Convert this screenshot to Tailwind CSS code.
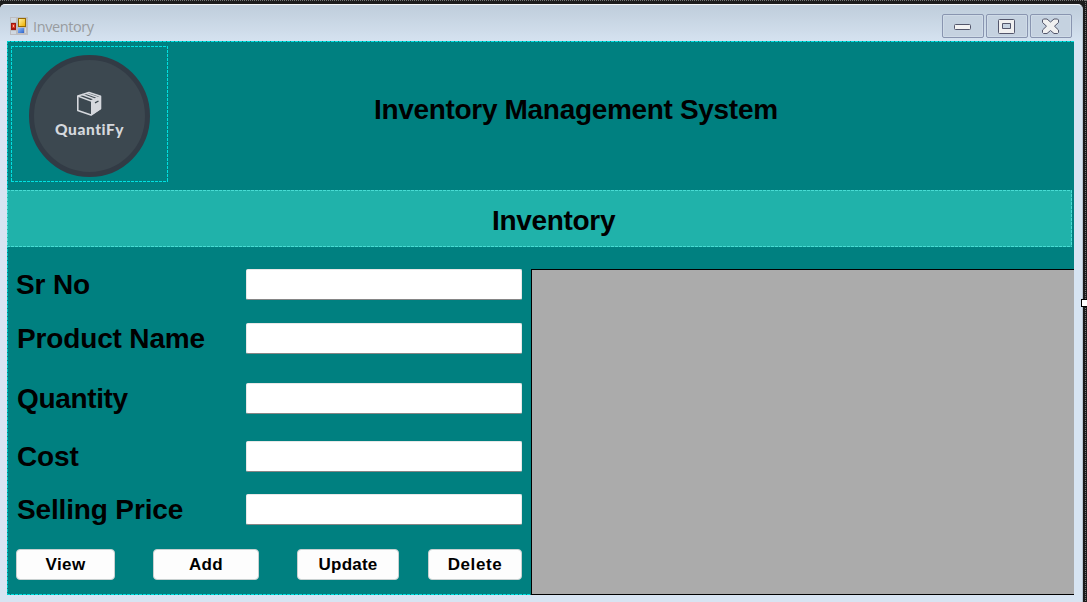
<!DOCTYPE html>
<html lang="en">
<head>
<meta charset="utf-8">
<title>Inventory</title>
<script src="https://cdn.jsdelivr.net/npm/@tailwindcss/browser@4"></script>
</head>
<body class="w-[1087px] h-[602px] overflow-hidden bg-[#1c1c1c] font-['Liberation_Sans',sans-serif] text-black relative">
<!-- designer surface edges -->
<svg class="absolute inset-0" width="1087" height="602" shape-rendering="crispEdges"><path d="M0 .5H1087M1085.500 0V602" stroke="#777" stroke-dasharray="1 1"/></svg>
<div class="relative mt-[4px] w-[1083px] h-[598px] rounded-t-[5px] border-t border-r border-t-[#f4f7fa] border-r-[#b9c5d3] bg-[#d7e4f2] pl-[7px]">
  <header class="-ml-[7px] pl-[10px] pr-[10px] h-[36px] flex items-start rounded-t-[5px] bg-linear-to-b from-[#bfcddb] to-[#d5e2f0]">
    <svg class="mt-[12px]" width="18" height="18" shape-rendering="crispEdges">
      <defs><linearGradient id="y" x2="1" y2="1"><stop stop-color="#fff0a0"/><stop offset="1" stop-color="#eeb000"/></linearGradient><linearGradient id="b" x2="1" y2="1"><stop stop-color="#8fc0ff"/><stop offset="1" stop-color="#2d62c8"/></linearGradient></defs>
      <path fill="#bdbdc1" d="M0 0h18v18H0z"/><path fill="#cfd8e1" d="M1 1h5v4H1zM1 14h5v3H1zM15 11h1v5h-1z"/>
      <path fill="#a01810" d="M1 6h5v7H1z"/><path fill="#d93a24" d="M2 7h3v4H2z"/><path fill="#ffb0a0" d="M3 8h1v2H3z"/>
      <path fill="#966a00" d="M8 1h8v9H8z"/><path fill="url(#y)" d="M9 2h6v7H9z"/><path fill="url(#b)" d="M8 11h6v5H8z"/>
    </svg>
    <span class="ml-[5px] mt-[12px] font-['Open_Sans',sans-serif] text-[14.500px] leading-[20px] text-[#999ca0] tracking-[-0.4px]">Inventory</span>
    <div class="ml-auto mt-[9px] flex gap-[2px]">
      <div class="w-[42px] h-[24px] rounded-[2px] border border-[#8995b0] bg-[#c5d2e0] shadow-[inset_0_0_0_1px_#cfdbe7]"><svg width="40" height="22"><rect x="11.500" y="9.500" width="16" height="5" rx="1" fill="#f3f3f3" stroke="#53566b"/></svg></div>
      <div class="w-[42px] h-[24px] rounded-[2px] border border-[#8995b0] bg-[#c5d2e0] shadow-[inset_0_0_0_1px_#cfdbe7]"><svg width="40" height="22"><path d="M12.500 4.500h14a1 1 0 0 1 1 1v12a1 1 0 0 1-1 1h-14a1 1 0 0 1-1-1v-12a1 1 0 0 1 1-1z" fill="#f0f0f0" stroke="#53566b"/><path d="M15.500 8.500h8v5h-8z" fill="#c5d2e0" stroke="#53566b"/></svg></div>
      <div class="w-[42px] h-[24px] rounded-[2px] border border-[#8995b0] bg-[#c5d2e0] shadow-[inset_0_0_0_1px_#cfdbe7]"><svg width="40" height="22"><path d="M12.500 4h3.500l3.500 3 3.500-3h3.500l1 1v2.500l-4 3.700 4 3.800v2.500l-1 1h-3.500l-3.500-3-3.500 3h-3.500l-1-1v-2.500l4-3.800-4-3.700v-2.500z" fill="#f0f0f0" stroke="#53566b" stroke-linejoin="round"/></svg></div>
    </div>
  </header>
  <main class="relative w-[1067px] h-[554px] bg-[#008080]">
    <svg class="absolute inset-0" width="1067" height="554" shape-rendering="crispEdges" fill="none"><path d="M0 .5H1067M0 553.500H524" stroke="#00e0e0" stroke-dasharray="3 1"/><path d="M.5 0V554" stroke="#00c8c8" stroke-dasharray="3 1"/></svg>
    <section class="h-[149px] flex pl-[4px] pt-[5px]">
      <div class="relative w-[157px] h-[136px]">
        <svg width="157" height="136" fill="none">
          <path d="M0 .5H157M0 135.500H157M.5 0V136M156.500 0V136" stroke="#00e0e0" stroke-dasharray="3 1" shape-rendering="crispEdges"/>
          <ellipse cx="78.500" cy="70" rx="58" ry="58.500" fill="#3c4850" stroke="#323b45" stroke-width="5"/>
          <path d="M66.800 50L78 46.600 89.500 50.300V62.500L80 69 66.800 64.500z" stroke="#d5d8dd" stroke-width="1.600" stroke-linejoin="round"/>
          <path d="M80 55L90 50.500V63L80 69.500z" fill="#d5d8dd"/>
          <path d="M66.800 50L80 55 89.500 50.300M71 48.500L83.500 53M75 47.300L87 51.500" stroke="#d5d8dd" stroke-width="1.400"/>
          <path d="M84 56.800l3.500-1.800" stroke="#3c4850" stroke-width="1.400"/>
        </svg>
        <span class="absolute left-0 top-[73px] w-[157px] text-center font-['Lato',sans-serif] font-black text-[15.500px] leading-[20px] tracking-[0.550px] text-[#d5d8dd]">QuantiFy</span>
      </div>
      <h1 class="ml-[206px] mt-[48px] font-bold text-[28px] leading-[32px] tracking-[-0.32px] whitespace-nowrap">Inventory Management System</h1>
    </section>
    <section class="relative w-[1065px] h-[57px] bg-[#20b2aa] flex">
      <svg class="absolute inset-0" width="1065" height="57" fill="none" shape-rendering="crispEdges"><path d="M0 .5H1065M0 56.500H1065M.5 0V57M1064.500 0V57" stroke="#48dcd4" stroke-dasharray="3 1"/></svg>
      <h2 class="ml-[485px] mt-[15px] font-bold text-[28px] leading-[32px] tracking-[-0.32px]">Inventory</h2>
    </section>
    <section class="flex pt-[22px]">
      <form class="w-[506px] ml-[9px] mr-[9px] font-bold text-[28px] leading-[31px] tracking-[-0.15px]">
        <label class="flex justify-between h-[54px]"><span>Sr No</span><input class="w-[276px] h-[31px] bg-white rounded-[2px] border border-[#e8e8e8] border-b-[#858585]"></label>
        <label class="flex justify-between h-[60px]"><span class="ml-px">Product Name</span><input class="w-[276px] h-[31px] bg-white rounded-[2px] border border-[#e8e8e8] border-b-[#858585]"></label>
        <label class="flex justify-between h-[58px]"><span class="ml-px tracking-[-0.35px]">Quantity</span><input class="w-[276px] h-[31px] bg-white rounded-[2px] border border-[#e8e8e8] border-b-[#858585]"></label>
        <label class="flex justify-between h-[53px]"><span class="ml-px">Cost</span><input class="w-[276px] h-[31px] bg-white rounded-[2px] border border-[#e8e8e8] border-b-[#858585]"></label>
        <label class="flex justify-between h-[55px]"><span class="ml-px">Selling Price</span><input class="w-[276px] h-[31px] bg-white rounded-[2px] border border-[#e8e8e8] border-b-[#858585]"></label>
        <div class="flex text-[17px] leading-[29px] tracking-[0.4px]">
          <button type="button" class="w-[99px] h-[31px] rounded-[4px] border border-[#c8d0d0] bg-[#fdfdfd]">View</button>
          <button type="button" class="ml-[38px] w-[106px] h-[31px] rounded-[4px] border border-[#c8d0d0] bg-[#fdfdfd]">Add</button>
          <button type="button" class="ml-[38px] w-[102px] h-[31px] rounded-[4px] border border-[#c8d0d0] bg-[#fdfdfd] tracking-[0.2px]">Update</button>
          <button type="button" class="ml-[29px] w-[94px] h-[31px] rounded-[4px] border border-[#c8d0d0] bg-[#fdfdfd] tracking-[0.6px]">Delete</button>
        </div>
      </form>
      <div class="w-[543px] h-[326px] bg-[#ababab] border border-black border-r-0"></div>
    </section>
  </main>
</div>
<div class="absolute left-[1081px] top-[299px] w-[8px] h-[8px] bg-white border border-black"></div>
</body>
</html>
